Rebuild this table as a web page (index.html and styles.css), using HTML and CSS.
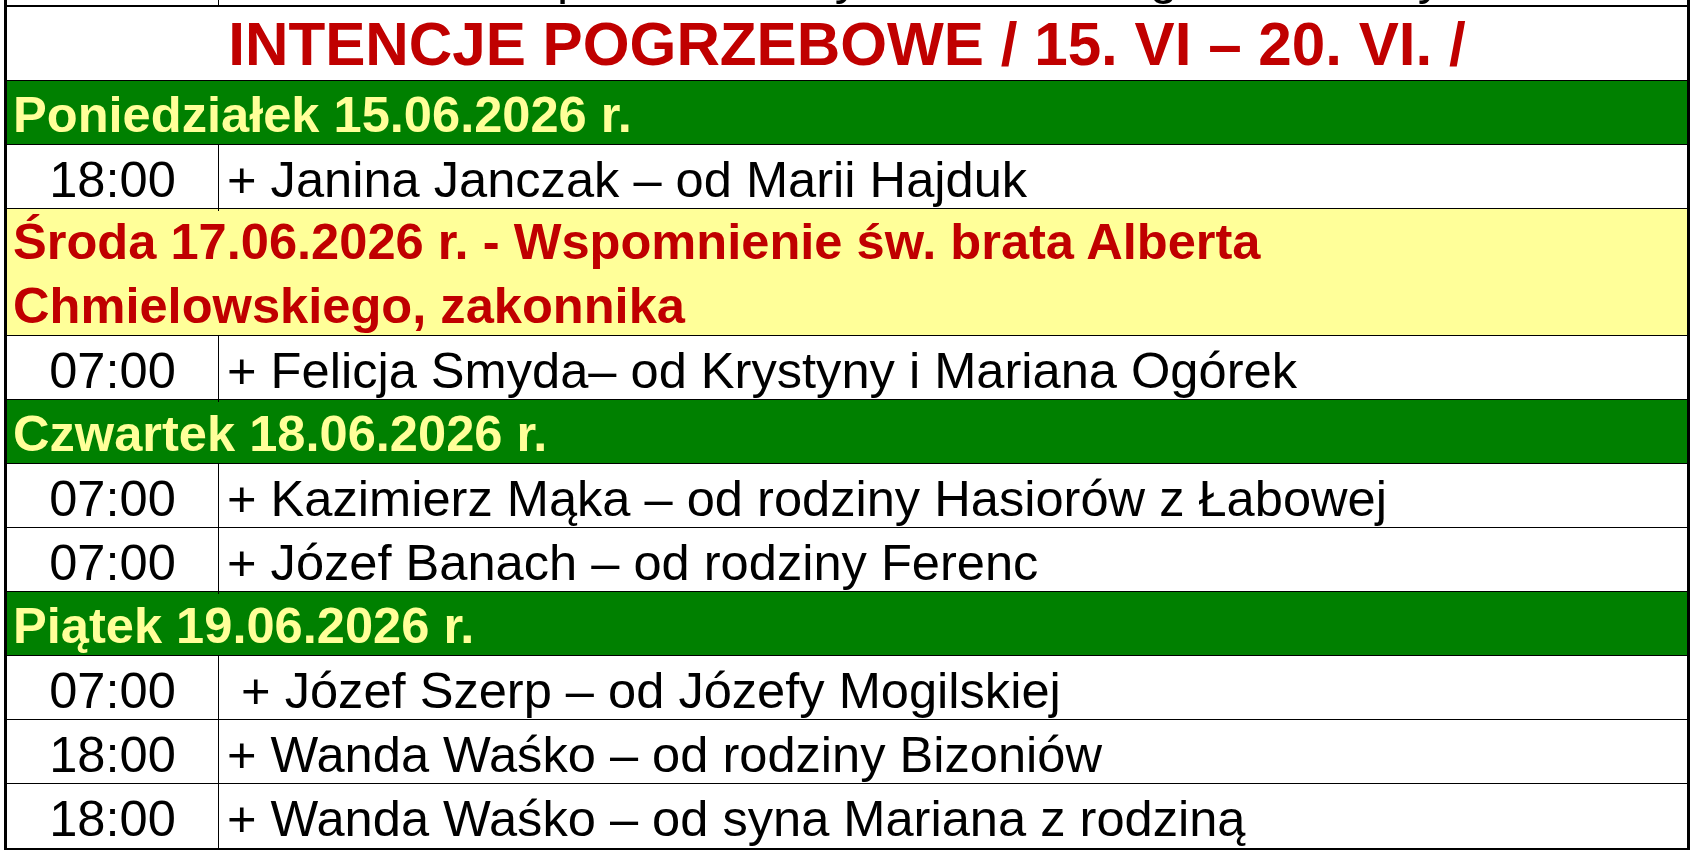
FILE: index.html
```html
<!DOCTYPE html>
<html lang="pl">
<head>
<meta charset="utf-8">
<title>Intencje pogrzebowe</title>
<link rel="stylesheet" href="styles.css">
</head>
<body>
<div class="sheet">
  <div class="row strip">
    <div class="time"></div>
    <div class="desc"><span class="m m1">p</span><span class="m m2">y</span><span class="m m3">g</span><span class="m m4">y</span></div>
  </div>
  <div class="title">INTENCJE POGRZEBOWE / 15. VI – 20. VI. /</div>
  <div class="day green">Poniedziałek 15.06.2026 r.</div>
  <div class="row"><div class="time">18:00</div><div class="desc">+ Janina Janczak – od Marii Hajduk</div></div>
  <div class="day yellow">Środa 17.06.2026 r. - Wspomnienie św. brata Alberta<br>Chmielowskiego, zakonnika</div>
  <div class="row"><div class="time">07:00</div><div class="desc">+ Felicja Smyda– od Krystyny i Mariana Ogórek</div></div>
  <div class="day green">Czwartek 18.06.2026 r.</div>
  <div class="row"><div class="time">07:00</div><div class="desc">+ Kazimierz Mąka – od rodziny Hasiorów z Łabowej</div></div>
  <div class="row"><div class="time">07:00</div><div class="desc">+ Józef Banach – od rodziny Ferenc</div></div>
  <div class="day green">Piątek 19.06.2026 r.</div>
  <div class="row"><div class="time">07:00</div><div class="desc">&nbsp;+ Józef Szerp – od Józefy Mogilskiej</div></div>
  <div class="row"><div class="time">18:00</div><div class="desc">+ Wanda Waśko – od rodziny Bizoniów</div></div>
  <div class="row last"><div class="time">18:00</div><div class="desc">+ Wanda Waśko – od syna Mariana z rodziną</div></div>
</div>
</body>
</html>
```

FILE: styles.css
```css
html, body {
  margin: 0;
  padding: 0;
  background: #ffffff;
}

body {
  font-family: "Liberation Sans", Arial, sans-serif;
  color: #000000;
  width: 1690px;
  height: 850px;
  overflow: hidden;
}

.sheet {
  margin-left: 4px;
  width: 1686px;
  box-sizing: border-box;
  border-left: 3px solid #000;
  border-right: 3px solid #000;
  border-bottom: 2px solid #000;
}

.row {
  display: grid;
  grid-template-columns: 212px 1fr;
  height: 64px;
  box-sizing: border-box;
  border-bottom: 1px solid #000;
  font-size: 50.6px;
  line-height: 63px;
}

.row.last {
  border-bottom: none;
}

.time {
  border-right: 1px solid #000;
  text-align: center;
  padding-top: 3px;
  box-sizing: border-box;
}

.desc {
  padding-left: 8px;
  padding-top: 3px;
  white-space: nowrap;
  overflow: hidden;
}

.strip {
  height: 5px;
  border-bottom: none;
  overflow: hidden;
}

.strip .time {
  padding: 0;
}

.strip .desc {
  padding: 0;
  display: flex;
  line-height: 50px;
  font-size: 50px;
  margin-top: -48px;
  height: 60px;
}

.m {
  display: inline-block;
}

.m1 { margin-left: 338px; }
.m2 { margin-left: 250px; }
.m3 { margin-left: 290px; }
.m4 { margin-left: 240px; }

.title {
  height: 76px;
  box-sizing: border-box;
  border-top: 2px solid #000;
  border-bottom: 1px solid #000;
  text-align: center;
  font-weight: bold;
  font-size: 60.2px;
  line-height: 71px;
  padding-top: 2px;
  color: #c00000;
  white-space: nowrap;
}

.day {
  box-sizing: border-box;
  border-bottom: 1px solid #000;
  font-weight: bold;
  font-size: 50.6px;
  padding-left: 6px;
  white-space: nowrap;
}

.green {
  height: 64px;
  background: #008000;
  color: #ffff99;
  line-height: 63px;
  padding-top: 2px;
}

.yellow {
  height: 127px;
  background: #ffff99;
  color: #c00000;
  line-height: 64px;
  padding-top: 1px;
}
```
